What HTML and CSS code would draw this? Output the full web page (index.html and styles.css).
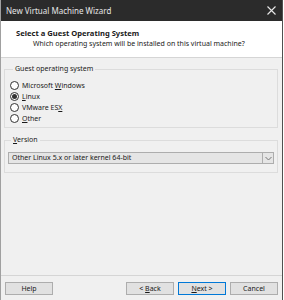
FILE: index.html
```html
<!DOCTYPE html>
<html>

<head>
    <title>New Virtual Machine Wizard</title>
    <meta charset="utf-8">
    <link rel="stylesheet" href="styles.css">
</head>

<body>
    <div class="window">
        <div class="titlebar">
            <span class="title">New Virtual Machine Wizard</span>
            <svg class="close" width="9" height="9" viewBox="0 0 9 9">
                <path d="M0.5 0.5 L8.5 8.5 M8.5 0.5 L0.5 8.5" stroke="#e8e8e8" stroke-width="1.1" />
            </svg>
        </div>

        <div class="header">
            <h2>Select a Guest Operating System</h2>
            <p>Which operating system will be installed on this virtual machine?</p>
        </div>

        <div class="content">
            <fieldset class="groep">
                <legend>Guest operating system</legend>
                <div class="radio"><span class="rund"></span><span>Microsoft <u>W</u>indows</span></div>
                <div class="radio"><span class="rund valgt"></span><span><u>L</u>inux</span></div>
                <div class="radio"><span class="rund"></span><span>VMware ES<u>X</u></span></div>
                <div class="radio"><span class="rund"></span><span><u>O</u>ther</span></div>
            </fieldset>

            <fieldset class="groep version">
                <legend><u>V</u>ersion</legend>
                <div class="dropdown">
                    <span class="valg">Other Linux 5.x or later kernel 64-bit</span>
                    <span class="pil">
                        <svg width="7" height="5" viewBox="0 0 7 5">
                            <path d="M0.5 1 L3.5 4 L6.5 1" stroke="#777" fill="none" stroke-width="1" />
                        </svg>
                    </span>
                </div>
            </fieldset>
        </div>

        <div class="footer">
            <button>Help</button>
            <div class="knapper">
                <button>&lt; <u>B</u>ack</button>
                <button class="standard"><u>N</u>ext &gt;</button>
                <button>Cancel</button>
            </div>
        </div>
    </div>
</body>

</html>
```

FILE: styles.css
```css
body {
    margin: 0;
    background-color: #ffffff;
    font-family: 'Noto Sans', sans-serif;
    font-size: 7px;
    color: #1a1a1a;
}

.window {
    width: 281px;
    height: 300px;
    display: flex;
    flex-direction: column;
    border-left: 1px solid #a0a0a0;
    border-right: 1px solid #505050;
    background-color: #f0f0f0;
}

.titlebar {
    height: 21px;
    background-color: #2b2b2b;
    display: flex;
    align-items: center;
    justify-content: space-between;
    padding: 0 6px 0 5px;
    flex-shrink: 0;
}

.title {
    color: #e6e6e6;
    font-size: 8px;
}

.header {
    height: 36px;
    background-color: #ffffff;
    border-bottom: 1px solid #d5d5d5;
    padding-left: 15px;
    flex-shrink: 0;
}

.header h2 {
    margin: 7px 0 0 0;
    font-size: 7.6px;
    font-weight: bold;
    line-height: 10px;
}

.header p {
    margin: 1px 0 0 17px;
    line-height: 10px;
}

.content {
    flex: 1;
    padding: 0 4px 0 3px;
    border-bottom: 1px solid #d5d5d5;
}

.groep {
    margin: 6px 0 0 0;
    padding: 6px 4px 3px 5px;
    border: 1px solid #dcdcdc;
    border-radius: 0;
}

.groep legend {
    padding: 0 2px;
    margin-left: 3px;
    line-height: 10px;
}

.radio {
    display: flex;
    align-items: center;
    height: 11px;
}

.rund {
    width: 7px;
    height: 7px;
    border: 1px solid #333333;
    border-radius: 50%;
    background-color: #ffffff;
    margin-right: 3px;
    display: flex;
    align-items: center;
    justify-content: center;
}

.rund.valgt::after {
    content: "";
    width: 5px;
    height: 5px;
    border-radius: 50%;
    background-color: #333333;
}

.version {
    margin-top: 7px;
    padding: 7px 3px 8px 3px;
}

.dropdown {
    height: 10px;
    display: flex;
    border: 1px solid #adadad;
    background-color: #e5e5e5;
}

.valg {
    flex: 1;
    padding-left: 3px;
    line-height: 10px;
    border-right: 1px solid #adadad;
}

.pil {
    width: 10px;
    display: flex;
    align-items: center;
    justify-content: center;
}

.footer {
    height: 18px;
    display: flex;
    justify-content: space-between;
    align-items: flex-start;
    padding: 6px 4px 0 4px;
    flex-shrink: 0;
}

.knapper {
    display: flex;
    gap: 4px;
}

button {
    width: 48px;
    height: 13px;
    padding: 0;
    font-family: 'Noto Sans', sans-serif;
    font-size: 7px;
    color: #1a1a1a;
    background-color: #e1e1e1;
    border: 1px solid #adadad;
}

.standard {
    border-color: #0078d7;
}
```
